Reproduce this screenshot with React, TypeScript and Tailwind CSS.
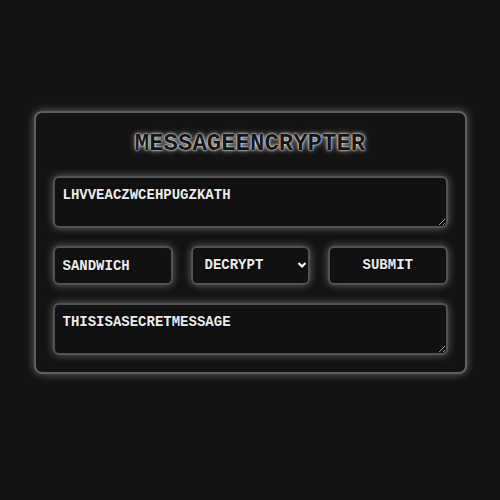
import React from "react";

const glow = "shadow-[0_0_8px_rgba(255,255,255,0.35)]";
const field =
  "bg-[#111111] border-2 border-[#525252] rounded-md text-[14px] font-bold text-[#ececec] [text-shadow:0_0_3px_rgba(0,0,0,0.9)] outline-none";

export default function App() {
  return (
    <div
      className="min-h-screen w-full bg-[#131313] pt-[111px]"
      style={{ fontFamily: '"Liberation Mono", "Courier New", monospace' }}
    >
      <div
        className={`mx-auto w-[433px] rounded-lg border-2 border-[#606060] bg-[#131313] px-[17px] pt-[17px] pb-[17px] ${glow}`}
      >
        <h1 className="text-center text-[24px] leading-[28px] font-bold text-[#151515] [text-shadow:0_0_3px_rgba(255,255,255,1),0_0_1px_rgba(255,255,255,1),0_0_6px_rgba(255,255,255,0.6)]">
          MESSAGEENCRYPTER
        </h1>
        <div className="mt-[18px] flex flex-col gap-[18px]">
          <textarea
            defaultValue="LHVVEACZWCEHPUGZKATH"
            className={`${field} ${glow} block h-[52px] w-full resize-y px-[8px] pt-[8px] leading-[18px]`}
          />
          <div className="flex gap-[18px]">
            <input
              defaultValue="SANDWICH"
              className={`${field} ${glow} h-[39px] w-[120px] px-[8px]`}
            />
            <div className={`relative h-[39px] w-[120px] rounded-md ${glow}`}>
              <select
                defaultValue="decrypt"
                className={`${field} h-full w-full appearance-none px-[12px]`}
              >
                <option value="encrypt">ENCRYPT</option>
                <option value="decrypt">DECRYPT</option>
              </select>
              <svg
                className="pointer-events-none absolute right-[3px] top-[15px]"
                width="10"
                height="8"
                viewBox="0 0 10 8"
              >
                <path d="M1.5 2 L5 5.5 L8.5 2" stroke="#ffffff" strokeWidth="2.2" fill="none" />
              </svg>
            </div>
            <button
              className={`${field} ${glow} h-[39px] w-[120px] cursor-pointer text-center`}
            >
              SUBMIT
            </button>
          </div>
          <textarea
            defaultValue="THISISASECRETMESSAGE"
            className={`${field} ${glow} block h-[52px] w-full resize-y px-[8px] pt-[8px] leading-[18px]`}
          />
        </div>
      </div>
    </div>
  );
}
